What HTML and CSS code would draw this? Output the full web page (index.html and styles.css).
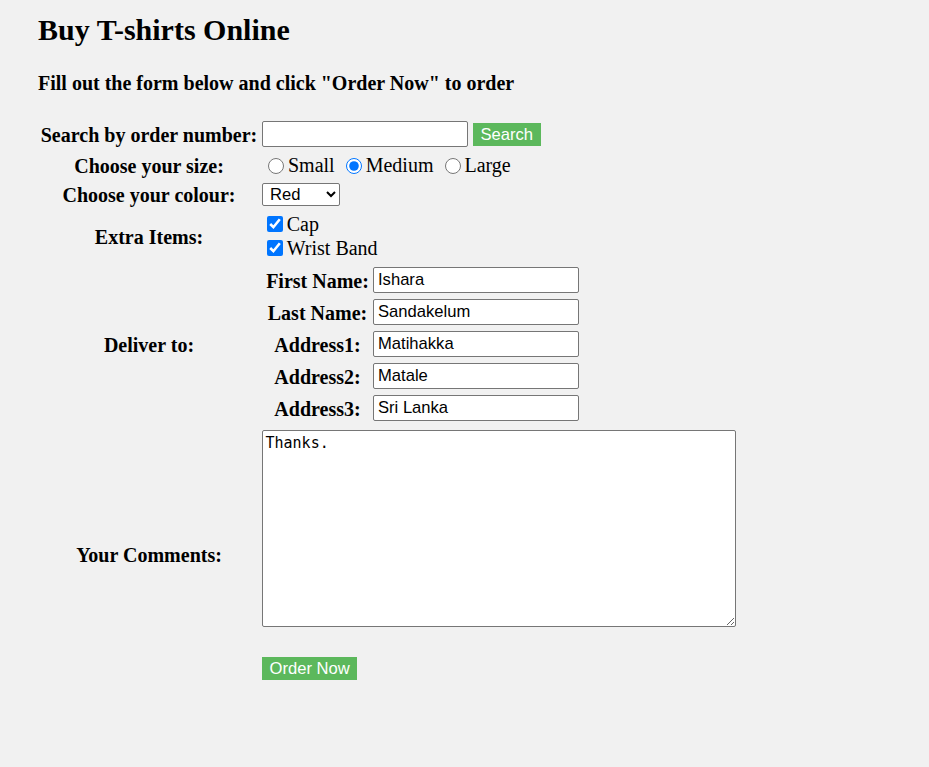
FILE: index.html
```html
<!DOCTYPE html>
<html lang="en">
<head>
<meta charset="utf-8">
<title>Buy T-shirts Online</title>
<link rel="stylesheet" href="styles.css">
</head>
<body>
<h1 class="title">Buy T-shirts Online</h1>
<h4 class="intro">Fill out the form below and click "Order Now" to order</h4>
<form class="order-form">
  <div class="label">Search by order number:</div>
  <div class="field search-row">
    <input class="text" type="text">
    <button class="btn" type="button">Search</button>
  </div>

  <div class="label">Choose your size:</div>
  <div class="field size-row">
    <label class="choice"><input class="radio" type="radio" name="size">Small</label>
    <label class="choice"><input class="radio" type="radio" name="size" checked>Medium</label>
    <label class="choice"><input class="radio" type="radio" name="size">Large</label>
  </div>

  <div class="label">Choose your colour:</div>
  <div class="field colour-row">
    <select class="select">
      <option>Red</option>
      <option>Blue</option>
      <option>Green</option>
    </select>
  </div>

  <div class="label">Extra Items:</div>
  <div class="field extras">
    <label class="check-line"><input class="check" type="checkbox" checked>Cap</label>
    <label class="check-line"><input class="check" type="checkbox" checked>Wrist Band</label>
  </div>

  <div class="label">Deliver to:</div>
  <div class="field deliver">
    <div class="sub-label">First Name:</div><input class="text" type="text" value="Ishara">
    <div class="sub-label">Last Name:</div><input class="text" type="text" value="Sandakelum">
    <div class="sub-label">Address1:</div><input class="text" type="text" value="Matihakka">
    <div class="sub-label">Address2:</div><input class="text" type="text" value="Matale">
    <div class="sub-label">Address3:</div><input class="text" type="text" value="Sri Lanka">
  </div>

  <div class="label">Your Comments:</div>
  <div class="field comments">
    <textarea class="area">Thanks.</textarea>
    <button class="btn order" type="button">Order Now</button>
  </div>
</form>
</body>
</html>
```
FILE: styles.css
```css
html { background: #f1f1f1; }
body {
  margin: 0;
  padding: 13px 38px;
  background: #f1f1f1;
  color: #000;
  font-family: "Liberation Serif", "Times New Roman", serif;
  font-size: 20px;
}
.title {
  margin: 0;
  font-size: 30px;
  line-height: 34px;
  font-weight: bold;
}
.intro {
  margin: 25px 0 0;
  font-size: 20px;
  line-height: 23px;
  font-weight: bold;
}
.order-form {
  margin-top: 25px;
  display: grid;
  grid-template-columns: 222px auto;
  column-gap: 2px;
  row-gap: 2px;
  justify-content: start;
}
.label {
  font-weight: bold;
  text-align: center;
  align-self: center;
  line-height: 23px;
  margin-bottom: -2px;
  white-space: nowrap;
}
.field { display: flex; }
.search-row {
  align-items: center;
  gap: 5px;
  padding: 1px 0;
}
.text {
  box-sizing: border-box;
  width: 206px;
  height: 26px;
  margin: 0;
  padding: 1px 4px;
  border: 1px solid #767676;
  border-radius: 2px;
  background: #fff;
  font-family: "Liberation Sans", Arial, sans-serif;
  font-size: 16.6px;
  color: #000;
}
.btn {
  height: 23px;
  margin: 0;
  padding: 0 7.5px;
  border: none;
  background: #5cb85c;
  color: #fff;
  font-family: "Liberation Sans", Arial, sans-serif;
  font-size: 16.6px;
  line-height: 23px;
}
.size-row {
  height: 31px;
  align-items: center;
  line-height: 23px;
}
.choice { display: flex; align-items: center; white-space: nowrap; }
.choice + .choice { margin-left: 5px; }
.radio {
  width: 16px;
  height: 16px;
  margin: 0 3.75px 0 6.25px;
}
.select {
  width: 78px;
  height: 23px;
  margin: 0;
  padding: 0 0 0 3px;
  border: 1px solid #767676;
  border-radius: 2px;
  background: #fff;
  font-family: "Liberation Sans", Arial, sans-serif;
  font-size: 16.6px;
  color: #000;
}
.extras {
  flex-direction: column;
  padding: 4px 0;
  line-height: 24px;
}
.check-line { display: flex; align-items: center; height: 24px; white-space: nowrap; }
.check {
  width: 16px;
  height: 16px;
  margin: 0 3.75px 0 5px;
}
.deliver {
  display: grid;
  grid-template-columns: 103px auto;
  column-gap: 4px;
  row-gap: 6px;
  padding: 1px 0 1px 4px;
  align-items: center;
}
.sub-label {
  font-weight: bold;
  text-align: center;
  line-height: 23px;
  margin-bottom: -2px;
  white-space: nowrap;
}
.comments {
  flex-direction: column;
  align-items: flex-start;
  padding: 6px 0 4px;
  gap: 30px;
}
.area {
  box-sizing: border-box;
  width: 474px;
  height: 197px;
  margin: 0;
  padding: 2.5px;
  border: 1px solid #767676;
  border-radius: 2px;
  background: #fff;
  font-family: "DejaVu Sans Mono", "Liberation Mono", monospace;
  font-size: 15px;
  color: #000;
}
```
